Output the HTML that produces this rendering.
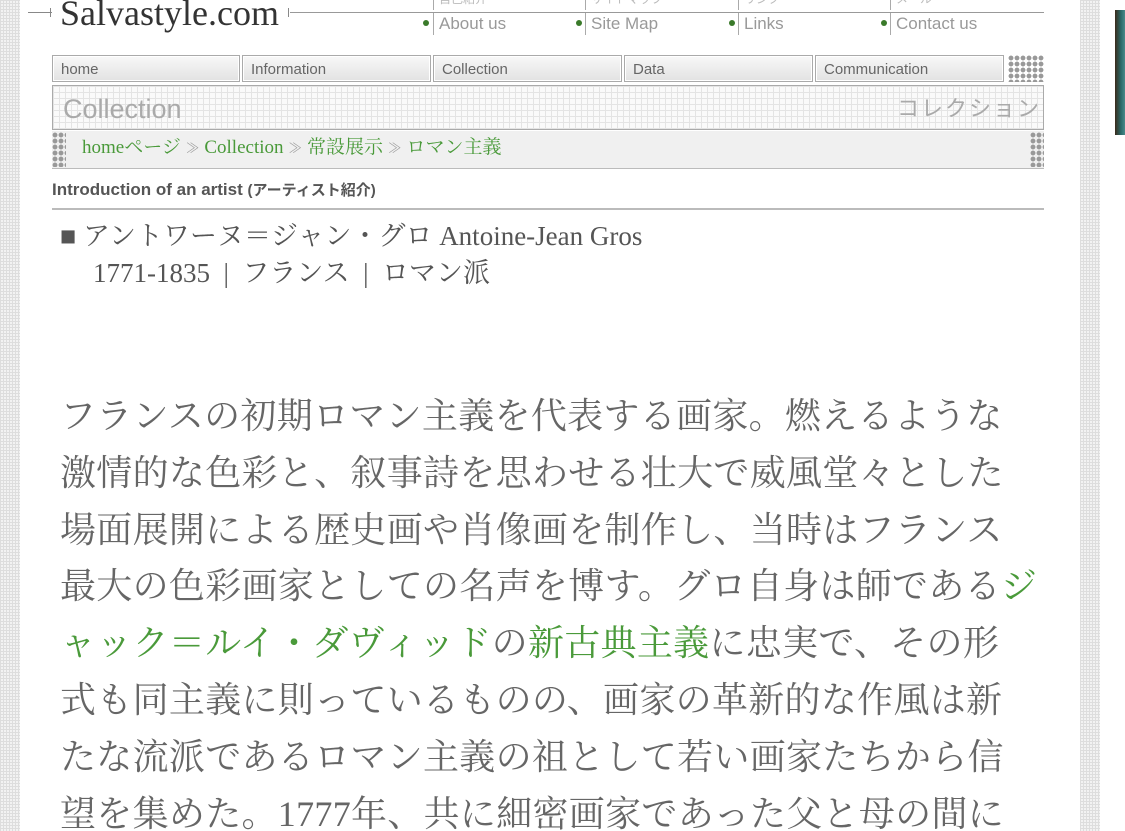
<!DOCTYPE html>
<html><head><meta charset="utf-8"><style>
html,body{margin:0;padding:0;background:#fff;width:1125px;height:831px;overflow:hidden;position:relative;font-family:"Liberation Sans","Noto Sans CJK JP",sans-serif}
.abs{position:absolute}
.stripe{background-color:#f2f2f2;background-image:linear-gradient(#ddd 1px,transparent 1px),linear-gradient(90deg,#ddd 1px,transparent 1px);background-size:3px 3px}
.tab{position:absolute;top:55px;height:27px;border:1px solid #aaa;background:linear-gradient(#f8f8f8,#e2e2e2);box-shadow:inset 0 0 0 1px #fff;font-size:15px;color:#666;line-height:28px;padding-left:8px;box-sizing:border-box}
.dots{position:absolute;background-image:radial-gradient(circle,#999 2.2px,transparent 2.6px);background-size:6px 6px}
.link{position:absolute;top:13px;font-size:17px;color:#999;border-left:1px solid #aaa;padding-left:5px;height:22px;line-height:22px}
.link.top{top:-8px;font-size:12px;color:#bbb;height:18px;line-height:14px}
.bul{position:absolute;top:20px;width:6px;height:6px;border-radius:3px;background:#3a7a2a}
.serif{font-family:"Liberation Serif","Noto Serif CJK SC","Noto Sans CJK JP",serif}
.body p{margin:0;white-space:nowrap;height:56.8px;line-height:56.8px}
.g{color:#4a9a3a}
</style></head><body>
<div class="abs stripe" style="left:0;top:0;width:20px;height:831px"></div>
<div class="abs stripe" style="left:1080px;top:0;width:20px;height:831px"></div>
<div class="abs" style="left:1115px;top:10px;width:10px;height:125px;background:linear-gradient(90deg,#3a2a1a,#2a6a6a 60%,#4a8a8a)"></div>

<div class="abs" style="left:28px;top:12px;width:24px;height:1px;background:#888"></div>
<div class="abs" style="left:50px;top:8px;width:1px;height:9px;background:#888"></div>
<div class="abs serif" style="left:60px;top:-9px;font-size:36px;color:#333;line-height:44px">Salvastyle.c<span style="position:relative">o<span style="position:absolute;left:3px;top:17px;width:12px;height:15px;border-radius:50%;background:#8ab95a;z-index:-1"></span></span>m</div>
<div class="abs" style="left:288px;top:8px;width:1px;height:9px;background:#888"></div>
<div class="abs" style="left:290px;top:12px;width:754px;height:1px;background:#999"></div>
<div class="link top" style="left:433px">自己紹介</div><div class="link" style="left:433px">About us</div>
<div class="link top" style="left:585px">サイトマップ</div><div class="link" style="left:585px">Site Map</div>
<div class="link top" style="left:738px">リンク</div><div class="link" style="left:738px">Links</div>
<div class="link top" style="left:890px">メール</div><div class="link" style="left:890px">Contact us</div>
<div class="bul" style="left:423px"></div><div class="bul" style="left:576px"></div><div class="bul" style="left:729px"></div><div class="bul" style="left:881px"></div>

<div class="tab" style="left:52px;width:188px">home</div>
<div class="tab" style="left:242px;width:189px">Information</div>
<div class="tab" style="left:433px;width:189px">Collection</div>
<div class="tab" style="left:624px;width:189px">Data</div>
<div class="tab" style="left:815px;width:189px">Communication</div>
<div class="dots" style="left:1008px;top:55px;width:36px;height:27px"></div>

<div class="abs" style="left:52px;top:85px;width:990px;height:43px;border:1px solid #aaa;background-color:#fafafa;background-image:linear-gradient(#e4e4e4 1px,transparent 1px),linear-gradient(90deg,#e4e4e4 1px,transparent 1px);background-size:6px 6px"></div>
<div class="abs" style="left:63px;top:92px;font-size:27px;color:#aaa;line-height:34px">Collection</div>
<div class="abs" style="left:897px;top:94px;font-size:22px;color:#aaa;letter-spacing:2px;line-height:30px">コレクション</div>

<div class="abs" style="left:52px;top:131px;width:992px;height:37px;background:#f0f0f0;border-bottom:1px solid #bbb"></div>
<div class="dots" style="left:52px;top:132px;width:14px;height:35px"></div>
<div class="dots" style="left:1030px;top:132px;width:14px;height:35px"></div>
<div class="abs serif" style="left:82px;top:135px;font-size:19px;color:#4a9a3a;line-height:26px">homeページ <span style="color:#999;font-size:14px">≫</span> Collection <span style="color:#999;font-size:14px">≫</span> 常設展示 <span style="color:#999;font-size:14px">≫</span> ロマン主義</div>

<div class="abs" style="left:52px;top:179px;font-size:17px;color:#555;line-height:22px;font-weight:bold">Introduction of an artist <span style="font-size:15px">(アーティスト紹介)</span></div>
<div class="abs" style="left:52px;top:208px;width:992px;height:2px;background:#bbb"></div>

<div class="abs serif" style="left:60px;top:218px;font-size:27px;color:#555;line-height:37px">■ アントワーヌ＝ジャン・グロ Antoine-Jean Gros<br><span style="padding-left:33px">1771-1835 &nbsp;| &nbsp;フランス &nbsp;| &nbsp;ロマン派</span></div>

<div class="abs serif body" style="left:60px;top:388px;font-size:36px;letter-spacing:0.3px;color:#666">
<p>フランスの初期ロマン主義を代表する画家。燃えるような</p>
<p>激情的な色彩と、叙事詩を思わせる壮大で威風堂々とした</p>
<p>場面展開による歴史画や肖像画を制作し、当時はフランス</p>
<p>最大の色彩画家としての名声を博す。グロ自身は師である<span class="g">ジ</span></p>
<p><span class="g">ャック＝ルイ・ダヴィッド</span>の<span class="g">新古典主義</span>に忠実で、その形</p>
<p>式も同主義に則っているものの、画家の革新的な作風は新</p>
<p>たな流派であるロマン主義の祖として若い画家たちから信</p>
<p>望を集めた。1777年、共に細密画家であった父と母の間に</p>
</div>
</body></html>
